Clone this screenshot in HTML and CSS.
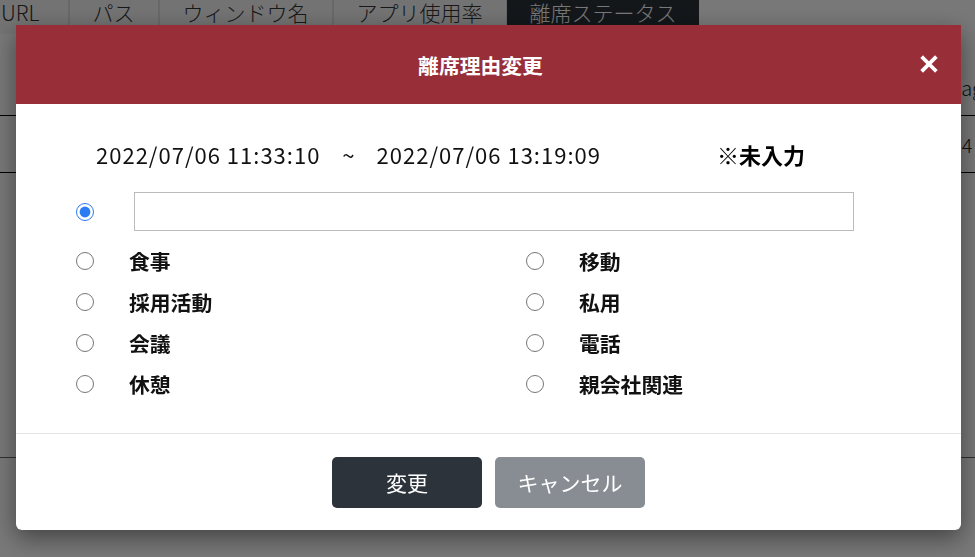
FILE: index.html
```html
<!DOCTYPE html>
<html>
  <head>
    <meta name="viewport" content="width=device-width, initial-scale=1.0" />
    <title>離席理由変更</title>
    <link rel="stylesheet" href="styles.css">
  </head>

  <body>
    <!-- Page behind the dialog -->
    <div id="page">
      <div class="tabs">
        <div class="tab tab-first">URL</div>
        <div class="tab">パス</div>
        <div class="tab">ウィンドウ名</div>
        <div class="tab">アプリ使用率</div>
        <div class="tab active">離席ステータス</div>
      </div>
      <div class="table">
        <div class="row row-head"><span class="cell-end">Usage</span></div>
        <div class="row row-body"><span class="cell-end">14</span></div>
        <div class="row row-tall"></div>
      </div>
    </div>

    <div id="overlay"></div>

    <!-- Dialog -->
    <div id="modal">
      <div class="modal-header">
        <h2 class="modal-title">離席理由変更</h2>
        <button class="close-btn" aria-label="Close">
          <svg width="18" height="18" viewBox="0 0 18 18">
            <path d="M3 3 L15 15 M15 3 L3 15" stroke="#fff" stroke-width="3.8" stroke-linecap="square" />
          </svg>
        </button>
      </div>

      <div class="modal-body">
        <div class="period">
          <span class="time">2022/07/06 11:33:10</span>
          <span class="tilde">~</span>
          <span class="time">2022/07/06 13:19:09</span>
          <span class="status">※未入力</span>
        </div>

        <div class="free-row">
          <input type="radio" name="reason" checked />
          <input type="text" class="free-input" />
        </div>

        <div class="options">
          <label class="option"><input type="radio" name="reason" /><span>食事</span></label>
          <label class="option"><input type="radio" name="reason" /><span>移動</span></label>
          <label class="option"><input type="radio" name="reason" /><span>採用活動</span></label>
          <label class="option"><input type="radio" name="reason" /><span>私用</span></label>
          <label class="option"><input type="radio" name="reason" /><span>会議</span></label>
          <label class="option"><input type="radio" name="reason" /><span>電話</span></label>
          <label class="option"><input type="radio" name="reason" /><span>休憩</span></label>
          <label class="option"><input type="radio" name="reason" /><span>親会社関連</span></label>
        </div>
      </div>

      <div class="modal-footer">
        <button class="btn btn-primary">変更</button>
        <button class="btn btn-secondary">キャンセル</button>
      </div>
    </div>
  </body>
</html>
```

FILE: styles.css
```css
body,
html {
  margin: 0;
  padding: 0;
  height: 100%;
  width: 100%;
  overflow: hidden;
}

body {
  font-family: "Noto Sans CJK JP", "Noto Sans", sans-serif;
  color: #212529;
  background: #fff;
}

/* Background page */
.tabs {
  display: flex;
  height: 34px;
}

.tab {
  display: flex;
  align-items: flex-start;
  height: 34px;
  padding: 0 23px;
  font-size: 21px;
  font-weight: 300;
  line-height: 24px;
  color: #333;
  border-left: 1px solid #ddd;
  border-right: 1px solid #ddd;
  background: #f4f4f4;
  box-sizing: border-box;
  white-space: nowrap;
}

.tab-first {
  padding-left: 1px;
  padding-right: 28px;
  border-left: none;
}

.tab.active {
  background: #2b3138;
  color: #fff;
  border-color: #2b3138;
  padding: 0 21px 0 22px;
}

.table .row {
  position: relative;
  border-bottom: 1px solid #000;
}

.row-head {
  height: 81px;
}

.row-body {
  height: 56px;
}

.row-tall {
  height: 284px;
  border-bottom-color: #666 !important;
}

.cell-end {
  position: absolute;
  left: 938px;
  font-size: 20px;
  font-weight: 300;
  white-space: nowrap;
}

.row-head .cell-end {
  top: 39px;
}

.row-body .cell-end {
  top: 14px;
  left: 951px;
}

#overlay {
  position: fixed;
  inset: 0;
  background: rgba(0, 0, 0, 0.53);
}

/* Dialog */
#modal {
  position: fixed;
  top: 25px;
  left: 16px;
  width: 945px;
  height: 505px;
  background: #fff;
  border-radius: 0 0 6px 6px;
  box-shadow: 0 8px 24px rgba(0, 0, 0, 0.45);
  display: flex;
  flex-direction: column;
}

.modal-header {
  position: relative;
  height: 79px;
  background: #982f38;
  display: flex;
  align-items: center;
  justify-content: center;
  padding-right: 16px;
}

.modal-title {
  margin: 0;
  color: #fff;
  font-size: 20.8px;
  font-weight: 700;
}

.close-btn {
  position: absolute;
  right: 22px;
  top: 29px;
  width: 20px;
  height: 20px;
  padding: 0;
  border: none;
  background: none;
  cursor: pointer;
  display: flex;
  align-items: center;
  justify-content: center;
}

.modal-body {
  height: 330px;
  border-bottom: 1px solid #e3e3e3;
  padding: 34px 0 0 60px;
  box-sizing: border-box;
}

.period {
  display: flex;
  align-items: center;
  height: 32px;
  padding-left: 20px;
  font-size: 22px;
  letter-spacing: 1px;
  color: #111;
}

.tilde {
  margin: 0 21px 0 22px;
}

.status {
  margin-left: 116px;
  font-weight: 700;
  letter-spacing: 0;
  color: #000;
}

.free-row {
  display: flex;
  align-items: center;
  margin-top: 22px;
}

input[type="radio"] {
  width: 18px;
  height: 18px;
  margin: 0;
  accent-color: #2b7bf3;
}

.free-input {
  width: 720px;
  height: 39px;
  margin-left: 40px;
  border: 1px solid #bbb;
  box-sizing: border-box;
}

.options {
  display: grid;
  grid-template-columns: 450px 1fr;
  row-gap: 13px;
  margin-top: 16px;
}

.option {
  display: flex;
  align-items: center;
  gap: 35px;
  height: 28px;
  font-size: 20.8px;
  font-weight: 700;
  color: #111;
}

.modal-footer {
  flex: 1;
  display: flex;
  justify-content: center;
  align-items: center;
  gap: 13px;
}

.btn {
  width: 150px;
  height: 51px;
  border: none;
  border-radius: 5px;
  color: #fff;
  font-family: inherit;
  font-size: 21px;
  cursor: pointer;
}

.btn-primary {
  background: #2d333b;
}

.btn-secondary {
  background: #888d94;
}
```
